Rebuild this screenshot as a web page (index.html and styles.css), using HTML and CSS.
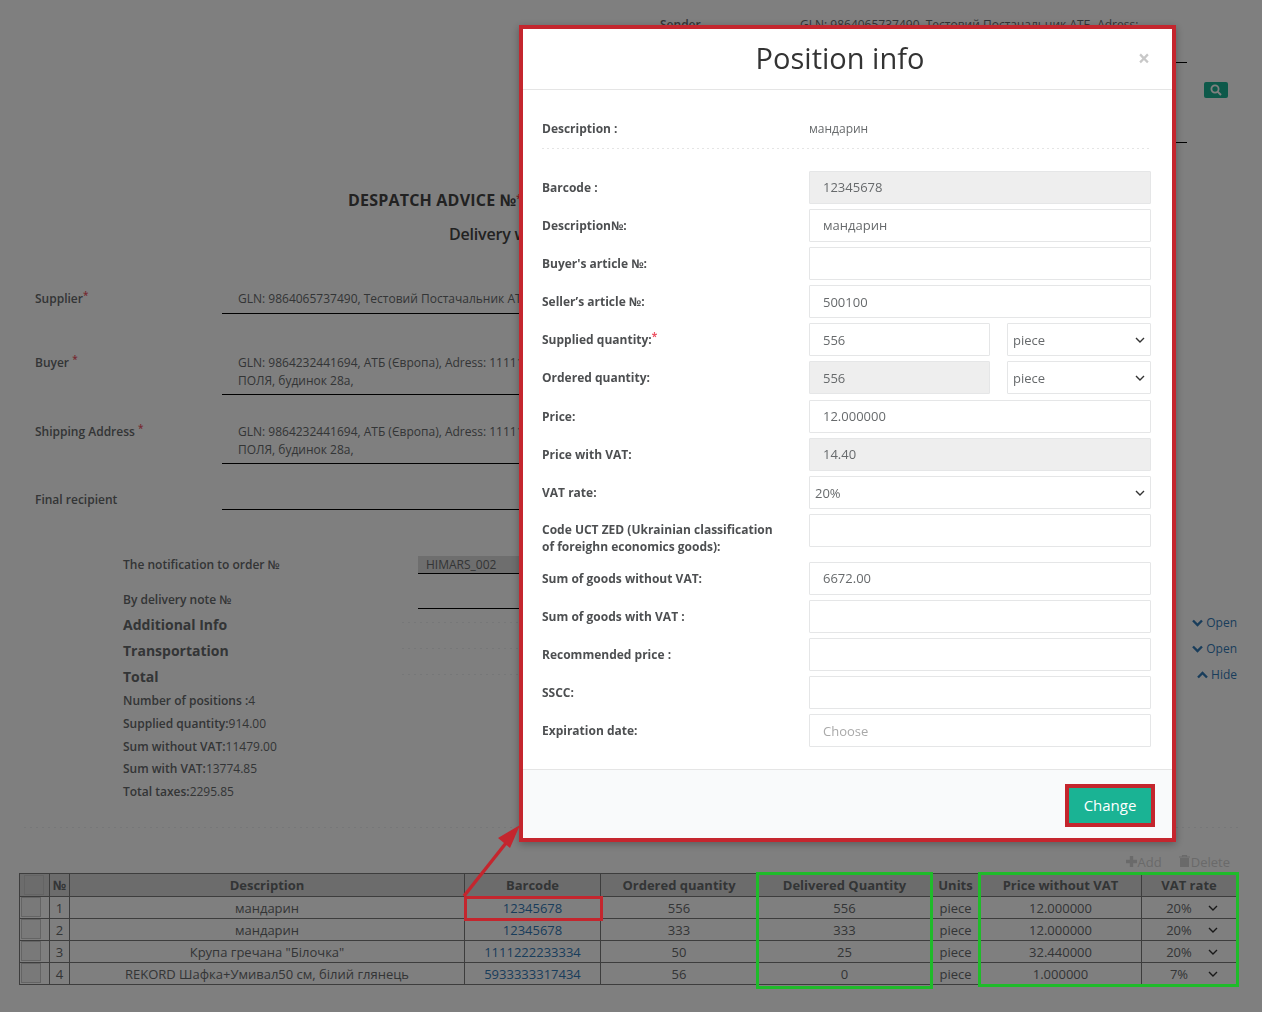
FILE: index.html
```html
<!DOCTYPE html>
<html lang="en">

<head>
    <meta charset="UTF-8">
    <meta name="viewport" content="width=device-width, initial-scale=1.0">
    <title>Position info</title>
    <link rel="stylesheet" href="styles.css">
</head>

<body>
    <div class="page">
        <div class="sender">
            <div class="sender-row">
                <div class="sender-label">Sender</div>
                <div class="sender-value">GLN: 9864065737490, Тестовий Постачальник АТБ, Adress:</div>
            </div>
            <div class="sender-row sender-row-tall">
                <div class="sender-label"></div>
                <div class="sender-value"></div>
                <button class="search-btn">
                    <svg width="12" height="12" viewBox="0 0 12 12"><circle cx="5" cy="5" r="3.6" fill="none" stroke="#fff" stroke-width="1.8"/><path d="M7.6 7.6L11 11" stroke="#fff" stroke-width="2"/></svg>
                </button>
            </div>
        </div>

        <h2 class="doc-title">DESPATCH ADVICE №<span class="req">*</span></h2>
        <h3 class="doc-subtitle">Delivery w</h3>

        <div class="field field-first">
            <div class="field-label">Supplier<span class="req">*</span></div>
            <div class="field-value">GLN: 9864065737490, Тестовий Постачальник АТ</div>
        </div>
        <div class="field field-buyer">
            <div class="field-label">Buyer <span class="req">*</span></div>
            <div class="field-value">GLN: 9864232441694, АТБ (Європа), Adress: 11111<br>ПОЛЯ, будинок 28а,</div>
        </div>
        <div class="field">
            <div class="field-label">Shipping Address <span class="req">*</span></div>
            <div class="field-value">GLN: 9864232441694, АТБ (Європа), Adress: 11111<br>ПОЛЯ, будинок 28а,</div>
        </div>
        <div class="field field-final">
            <div class="field-label">Final recipient</div>
            <div class="field-value field-value-empty"></div>
        </div>

        <div class="order-row order-row-first">
            <div class="order-label">The notification to order №</div>
            <div class="order-value order-value-filled">HIMARS_002</div>
        </div>
        <div class="order-row">
            <div class="order-label">By delivery note №</div>
            <div class="order-value"></div>
        </div>

        <div class="info">
            <div class="info-row">
                <div class="info-title">Additional Info</div>
                <div class="info-dots"></div>
                <a class="toggle">
                    <svg width="11" height="8" viewBox="0 0 11 8"><path d="M1 1.5L5.5 6L10 1.5" fill="none" stroke="#337ab7" stroke-width="2.4"/></svg>
                    Open
                </a>
            </div>
            <div class="info-row">
                <div class="info-title">Transportation</div>
                <div class="info-dots"></div>
                <a class="toggle">
                    <svg width="11" height="8" viewBox="0 0 11 8"><path d="M1 1.5L5.5 6L10 1.5" fill="none" stroke="#337ab7" stroke-width="2.4"/></svg>
                    Open
                </a>
            </div>
            <div class="info-row">
                <div class="info-title">Total</div>
                <div class="info-dots"></div>
                <a class="toggle">
                    <svg width="11" height="8" viewBox="0 0 11 8"><path d="M1 6.5L5.5 2L10 6.5" fill="none" stroke="#337ab7" stroke-width="2.4"/></svg>
                    Hide
                </a>
            </div>
        </div>

        <div class="totals">
            <div><b>Number of positions :</b>4</div>
            <div><b>Supplied quantity:</b>914.00</div>
            <div><b>Sum without VAT:</b>11479.00</div>
            <div><b>Sum with VAT:</b>13774.85</div>
            <div><b>Total taxes:</b>2295.85</div>
        </div>

        <div class="divider"></div>

        <div class="table-actions">
            <span class="action">
                <svg width="11" height="11" viewBox="0 0 11 11"><path d="M5.5 0V11M0 5.5H11" stroke="#d4d4d4" stroke-width="3.4"/></svg>Add
            </span>
            <span class="action">
                <svg width="11" height="12" viewBox="0 0 11 12"><path d="M0 2H11M3.5 2V.6H7.5V2" fill="none" stroke="#d4d4d4" stroke-width="1.2"/><path d="M1 3H10V12H1Z" fill="#d4d4d4"/></svg>Delete
            </span>
        </div>

        <table class="positions">
            <thead>
                <tr>
                    <th class="col-check"><span class="check check-head"></span></th>
                    <th class="col-num">№</th>
                    <th class="col-desc">Description</th>
                    <th class="col-barcode">Barcode</th>
                    <th class="col-ordered">Ordered quantity</th>
                    <th class="col-delivered">Delivered Quantity</th>
                    <th class="col-units">Units</th>
                    <th class="col-price">Price without VAT</th>
                    <th class="col-vat">VAT rate</th>
                </tr>
            </thead>
            <tbody>
                <tr>
                    <td class="cell-check"><span class="check"></span></td>
                    <td>1</td>
                    <td>мандарин</td>
                    <td><a>12345678</a></td>
                    <td>556</td>
                    <td>556</td>
                    <td>piece</td>
                    <td>12.000000</td>
                    <td><select class="vat-select"><option>20%</option></select></td>
                </tr>
                <tr>
                    <td class="cell-check"><span class="check"></span></td>
                    <td>2</td>
                    <td>мандарин</td>
                    <td><a>12345678</a></td>
                    <td>333</td>
                    <td>333</td>
                    <td>piece</td>
                    <td>12.000000</td>
                    <td><select class="vat-select"><option>20%</option></select></td>
                </tr>
                <tr>
                    <td class="cell-check"><span class="check"></span></td>
                    <td>3</td>
                    <td>Крупа гречана "Білочка"</td>
                    <td><a>1111222233334</a></td>
                    <td>50</td>
                    <td>25</td>
                    <td>piece</td>
                    <td>32.440000</td>
                    <td><select class="vat-select"><option>20%</option></select></td>
                </tr>
                <tr>
                    <td class="cell-check"><span class="check"></span></td>
                    <td>4</td>
                    <td>REKORD Шафка+Умивал50 см, білий глянець</td>
                    <td><a>5933333317434</a></td>
                    <td>56</td>
                    <td>0</td>
                    <td>piece</td>
                    <td>1.000000</td>
                    <td><select class="vat-select"><option>7%</option></select></td>
                </tr>
            </tbody>
        </table>
    </div>

    <div class="backdrop">
        <div class="modal">
            <div class="modal-header">
                <h4 class="modal-title">Position info</h4>
                <span class="modal-close">×</span>
            </div>
            <div class="modal-body">
                <div class="static-row">
                    <label class="form-label">Description :</label>
                    <div class="static-value">мандарин</div>
                </div>
                <div class="form-row">
                    <label class="form-label">Barcode :</label>
                    <input class="form-input" value="12345678" disabled>
                </div>
                <div class="form-row">
                    <label class="form-label">Description№:</label>
                    <input class="form-input" value="мандарин">
                </div>
                <div class="form-row">
                    <label class="form-label">Buyer's article №:</label>
                    <input class="form-input">
                </div>
                <div class="form-row">
                    <label class="form-label">Seller’s article №:</label>
                    <input class="form-input" value="500100">
                </div>
                <div class="form-row">
                    <label class="form-label">Supplied quantity:<span class="req">*</span></label>
                    <div class="input-pair">
                        <input class="form-input" value="556">
                        <select class="form-select"><option>piece</option></select>
                    </div>
                </div>
                <div class="form-row">
                    <label class="form-label">Ordered quantity:</label>
                    <div class="input-pair">
                        <input class="form-input" value="556" disabled>
                        <select class="form-select"><option>piece</option></select>
                    </div>
                </div>
                <div class="form-row">
                    <label class="form-label">Price:</label>
                    <input class="form-input" value="12.000000">
                </div>
                <div class="form-row">
                    <label class="form-label">Price with VAT:</label>
                    <input class="form-input" value="14.40" disabled>
                </div>
                <div class="form-row">
                    <label class="form-label">VAT rate:</label>
                    <select class="form-select"><option>20%</option></select>
                </div>
                <div class="form-row form-row-tall">
                    <label class="form-label">Code UCT ZED (Ukrainian classification of foreighn economics goods):</label>
                    <input class="form-input">
                </div>
                <div class="form-row">
                    <label class="form-label">Sum of goods without VAT:</label>
                    <input class="form-input" value="6672.00">
                </div>
                <div class="form-row">
                    <label class="form-label">Sum of goods with VAT :</label>
                    <input class="form-input">
                </div>
                <div class="form-row">
                    <label class="form-label">Recommended price :</label>
                    <input class="form-input">
                </div>
                <div class="form-row">
                    <label class="form-label">SSCC:</label>
                    <input class="form-input">
                </div>
                <div class="form-row">
                    <label class="form-label">Expiration date:</label>
                    <input class="form-input" placeholder="Choose">
                </div>
            </div>
            <div class="modal-footer">
                <button class="btn-change">Change</button>
            </div>
        </div>
    </div>

    <!-- annotations drawn on top of the screenshot -->
    <div class="mark mark-barcode"></div>
    <div class="mark-green mark-delivered"></div>
    <div class="mark-green mark-price"></div>
    <svg class="mark-arrow" width="70" height="80" viewBox="0 0 70 80">
        <path d="M4 76L50 18" stroke="#c4262e" stroke-width="3.4" fill="none"/>
        <path d="M60 5L38 18L50 28Z" fill="#c4262e"/>
    </svg>
</body>

</html>
```

FILE: styles.css
```css
* {
    box-sizing: border-box;
}
html, body {
    margin: 0;
    height: 100%;
    overflow: hidden;
}
body {
    font-family: "Open Sans", Arial, sans-serif;
    font-size: 12px;
    color: #676a6c;
    background-color: #ffffff;
}
.page {
    width: 1262px;
    height: 1012px;
}
.req {
    color: #ed5565;
    font-size: 10px;
    line-height: 0;
    vertical-align: 4px;
}

/* sender block, mostly hidden under the modal */
.sender {
    margin-left: 660px;
    width: 568px;
    padding-top: 16px;
}
.sender-row {
    display: flex;
    height: 47px;
    line-height: 18px;
}
.sender-row-tall {
    height: 80px;
}
.sender-label {
    width: 140px;
    font-weight: 600;
}
.sender-value {
    width: 387px;
    border-bottom: 1px solid #000000;
}
.search-btn {
    width: 24px;
    height: 16px;
    margin: 19px 0 0 17px;
    padding: 0;
    border: none;
    border-radius: 2px;
    background-color: #1ab394;
    display: flex;
    align-items: center;
    justify-content: center;
}

.doc-title {
    margin: 46px 0 0;
    padding-left: 348px;
    font-size: 16px;
    line-height: 22px;
    font-weight: 700;
    letter-spacing: 0.2px;
    color: #444444;
}
.doc-subtitle {
    margin: 12px 0 0;
    padding-left: 449px;
    font-size: 16px;
    line-height: 22px;
    font-weight: 600;
    letter-spacing: -0.2px;
    color: #444444;
}

.field {
    display: flex;
    margin-top: 28px;
    padding-left: 35px;
    line-height: 18px;
}
.field-first {
    margin-top: 45px;
}
.field-buyer {
    margin-top: 40px;
}
.field-final {
    margin-top: 27px;
}
.field-label {
    width: 187px;
    font-weight: 600;
}
/* the line ends under the modal */
.field-value {
    width: 310px;
    padding: 0 0 4px 16px;
    white-space: nowrap;
    border-bottom: 1px solid #000000;
}
.field-first .field-value {
    padding-bottom: 5px;
}
.field-value-empty {
    height: 19px;
    padding: 0;
}

.order-row {
    display: flex;
    margin-top: 17px;
    padding-left: 123px;
    line-height: 17px;
}
.order-row-first {
    margin-top: 46px;
}
.order-label {
    width: 295px;
    font-weight: 600;
}
.order-value {
    width: 110px;
    height: 18px;
    padding-left: 8px;
    overflow: hidden;
    border-bottom: 1px solid #000000;
}
.order-value-filled {
    background-color: #dddddd;
}

.info {
    padding: 1px 25px 0 123px;
}
.info-row {
    display: flex;
    height: 24px;
    margin-top: 2px;
    align-items: center;
}
.info-title {
    width: 279px;
    font-size: 14px;
    font-weight: 700;
}
.info-dots {
    width: 116px;
    height: 1px;
    margin-top: -4px;
    background-image: repeating-linear-gradient(to right, #eceef0 0, #eceef0 2px, transparent 2px, transparent 6px);
}
.toggle {
    margin-left: auto;
    margin-top: -4px;
    color: #337ab7;
}

.totals {
    padding-top: 2px;
    padding-left: 123px;
    line-height: 22.75px;
}
.totals b {
    font-weight: 600;
}

.divider {
    margin: 23px 0 0 24px;
    width: 1214px;
    height: 1px;
    background-image: repeating-linear-gradient(to right, #eceef0 0, #eceef0 2px, transparent 2px, transparent 6px);
}
.table-actions {
    display: flex;
    justify-content: flex-end;
    gap: 17px;
    height: 18px;
    margin-top: 25px;
    padding-right: 32px;
    font-size: 13px;
    line-height: 18px;
    color: #d4d4d4;
}
.action svg {
    margin-right: 1px;
}

.positions {
    width: 1217px;
    margin: 2px 0 0 19px;
    border-collapse: collapse;
    table-layout: fixed;
    font-size: 13px;
    text-align: center;
}
.positions th, .positions td {
    height: 22px;
    padding: 2px 0 0;
    border: 1px solid #7a7a7a;
    line-height: 19px;
    white-space: nowrap;
}
.positions th {
    height: 23px;
    padding: 0;
    line-height: 20px;
    background-color: #d9d9d9;
    font-weight: 700;
}
.positions a {
    color: #337ab7;
}
.col-check { width: 30px; }
.col-num { width: 20px; }
.col-desc { width: 395px; }
.col-barcode { width: 136px; }
.col-ordered { width: 157px; }
.col-delivered { width: 174px; }
.col-units { width: 48px; }
.col-price { width: 162px; }
.col-vat { width: 95px; }
.positions .cell-check {
    padding: 0;
}
.check {
    display: block;
    width: 20px;
    height: 20px;
    margin-left: 1px;
    border: 1px solid #c8c8c8;
    background-color: #f2f2f2;
}
.check-head {
    margin-left: 4px;
    background-color: #d9d9d9;
}
.vat-select {
    display: block;
    width: 76px;
    height: 19px;
    margin-left: 4px;
    padding: 0 10px 0 0;
    border: none;
    appearance: none;
    background: transparent url("data:image/svg+xml,%3Csvg xmlns='http://www.w3.org/2000/svg' width='10' height='6'%3E%3Cpath d='M1 1l4 4 4-4' fill='none' stroke='%23333' stroke-width='1.4'/%3E%3C/svg%3E") no-repeat right 4px center;
    font-family: inherit;
    font-size: 13px;
    color: #676a6c;
    text-align: center;
}

/* modal */
.backdrop {
    position: fixed;
    top: 0;
    left: 0;
    right: 0;
    bottom: 0;
    padding: 25px 0 0 519px;
    background-color: rgba(0, 0, 0, 0.5);
}
.modal {
    width: 657px;
    border: 4px solid #c4262e;
    background-color: #ffffff;
    box-shadow: 0 2px 8px rgba(0, 0, 0, 0.3);
}
.modal-header {
    position: relative;
    height: 61px;
    padding-right: 15px;
    border-bottom: 1px solid #e5e5e5;
    text-align: center;
}
.modal-title {
    margin: 0;
    font-size: 29px;
    line-height: 58px;
    font-weight: 500;
    color: #333333;
}
.modal-close {
    position: absolute;
    top: 15px;
    right: 22px;
    font-size: 21px;
    line-height: 28px;
    font-weight: 700;
    color: #c8c8c8;
}
.modal-body {
    padding: 30px 21px 16.3px 19px;
}
.form-label {
    display: block;
    width: 267px;
    padding-right: 30px;
    flex-shrink: 0;
    font-weight: 700;
    line-height: 17px;
    color: #4d4f51;
}
.static-row {
    display: flex;
    height: 29px;
    margin-bottom: 21.5px;
    background-image: repeating-linear-gradient(to right, #e5e5e5 0, #e5e5e5 2px, transparent 2px, transparent 5px);
    background-size: 100% 1px;
    background-position: bottom;
    background-repeat: no-repeat;
    color: #676a6c;
    line-height: 17px;
}
.form-row {
    display: flex;
    align-items: center;
    height: 33px;
    margin-bottom: 5.2px;
}
.form-row-tall {
    height: 47.4px;
    margin-bottom: 0;
}
.form-row-tall .form-input {
    align-self: flex-start;
}
.form-input {
    width: 342px;
    height: 33px;
    padding: 0 13px;
    border: 1px solid #e5e6e7;
    border-radius: 1px;
    background-color: #ffffff;
    font-family: inherit;
    font-size: 13px;
    color: #676a6c;
}
.form-input:disabled {
    background-color: #eeeeee;
    color: #676a6c;
}
.form-input::placeholder {
    color: #a9a9a9;
}
.form-select {
    width: 342px;
    height: 33px;
    padding: 0 5px;
    border: 1px solid #e5e6e7;
    border-radius: 1px;
    appearance: none;
    background: #ffffff url("data:image/svg+xml,%3Csvg xmlns='http://www.w3.org/2000/svg' width='10' height='6'%3E%3Cpath d='M1 1l4 4 4-4' fill='none' stroke='%23333' stroke-width='1.4'/%3E%3C/svg%3E") no-repeat right 5px center;
    font-family: inherit;
    font-size: 13px;
    color: #676a6c;
}
.input-pair {
    display: flex;
    gap: 17px;
}
.input-pair .form-input {
    width: 181px;
}
.input-pair .form-select {
    width: 144px;
}
.modal-footer {
    display: flex;
    justify-content: flex-end;
    height: 69px;
    padding: 18px 21px 0 0;
    border-top: 1px solid #e5e5e5;
    background-color: #f9fafb;
}
.btn-change {
    width: 82px;
    height: 35px;
    border: none;
    outline: 4px solid #c4262e;
    background-color: #1ab394;
    font-family: inherit;
    font-size: 15px;
    color: #ffffff;
}

/* annotations */
.mark, .mark-green, .mark-arrow {
    position: absolute;
}
.mark-barcode {
    top: 896px;
    left: 464px;
    width: 139px;
    height: 25px;
    border: 3px solid #c4262e;
}
.mark-green {
    top: 872px;
    border: 3px solid #1fbb2a;
}
.mark-delivered {
    left: 756px;
    width: 177px;
    height: 117px;
}
.mark-price {
    left: 978px;
    width: 261px;
    height: 115px;
}
.mark-arrow {
    top: 820px;
    left: 460px;
}
```
